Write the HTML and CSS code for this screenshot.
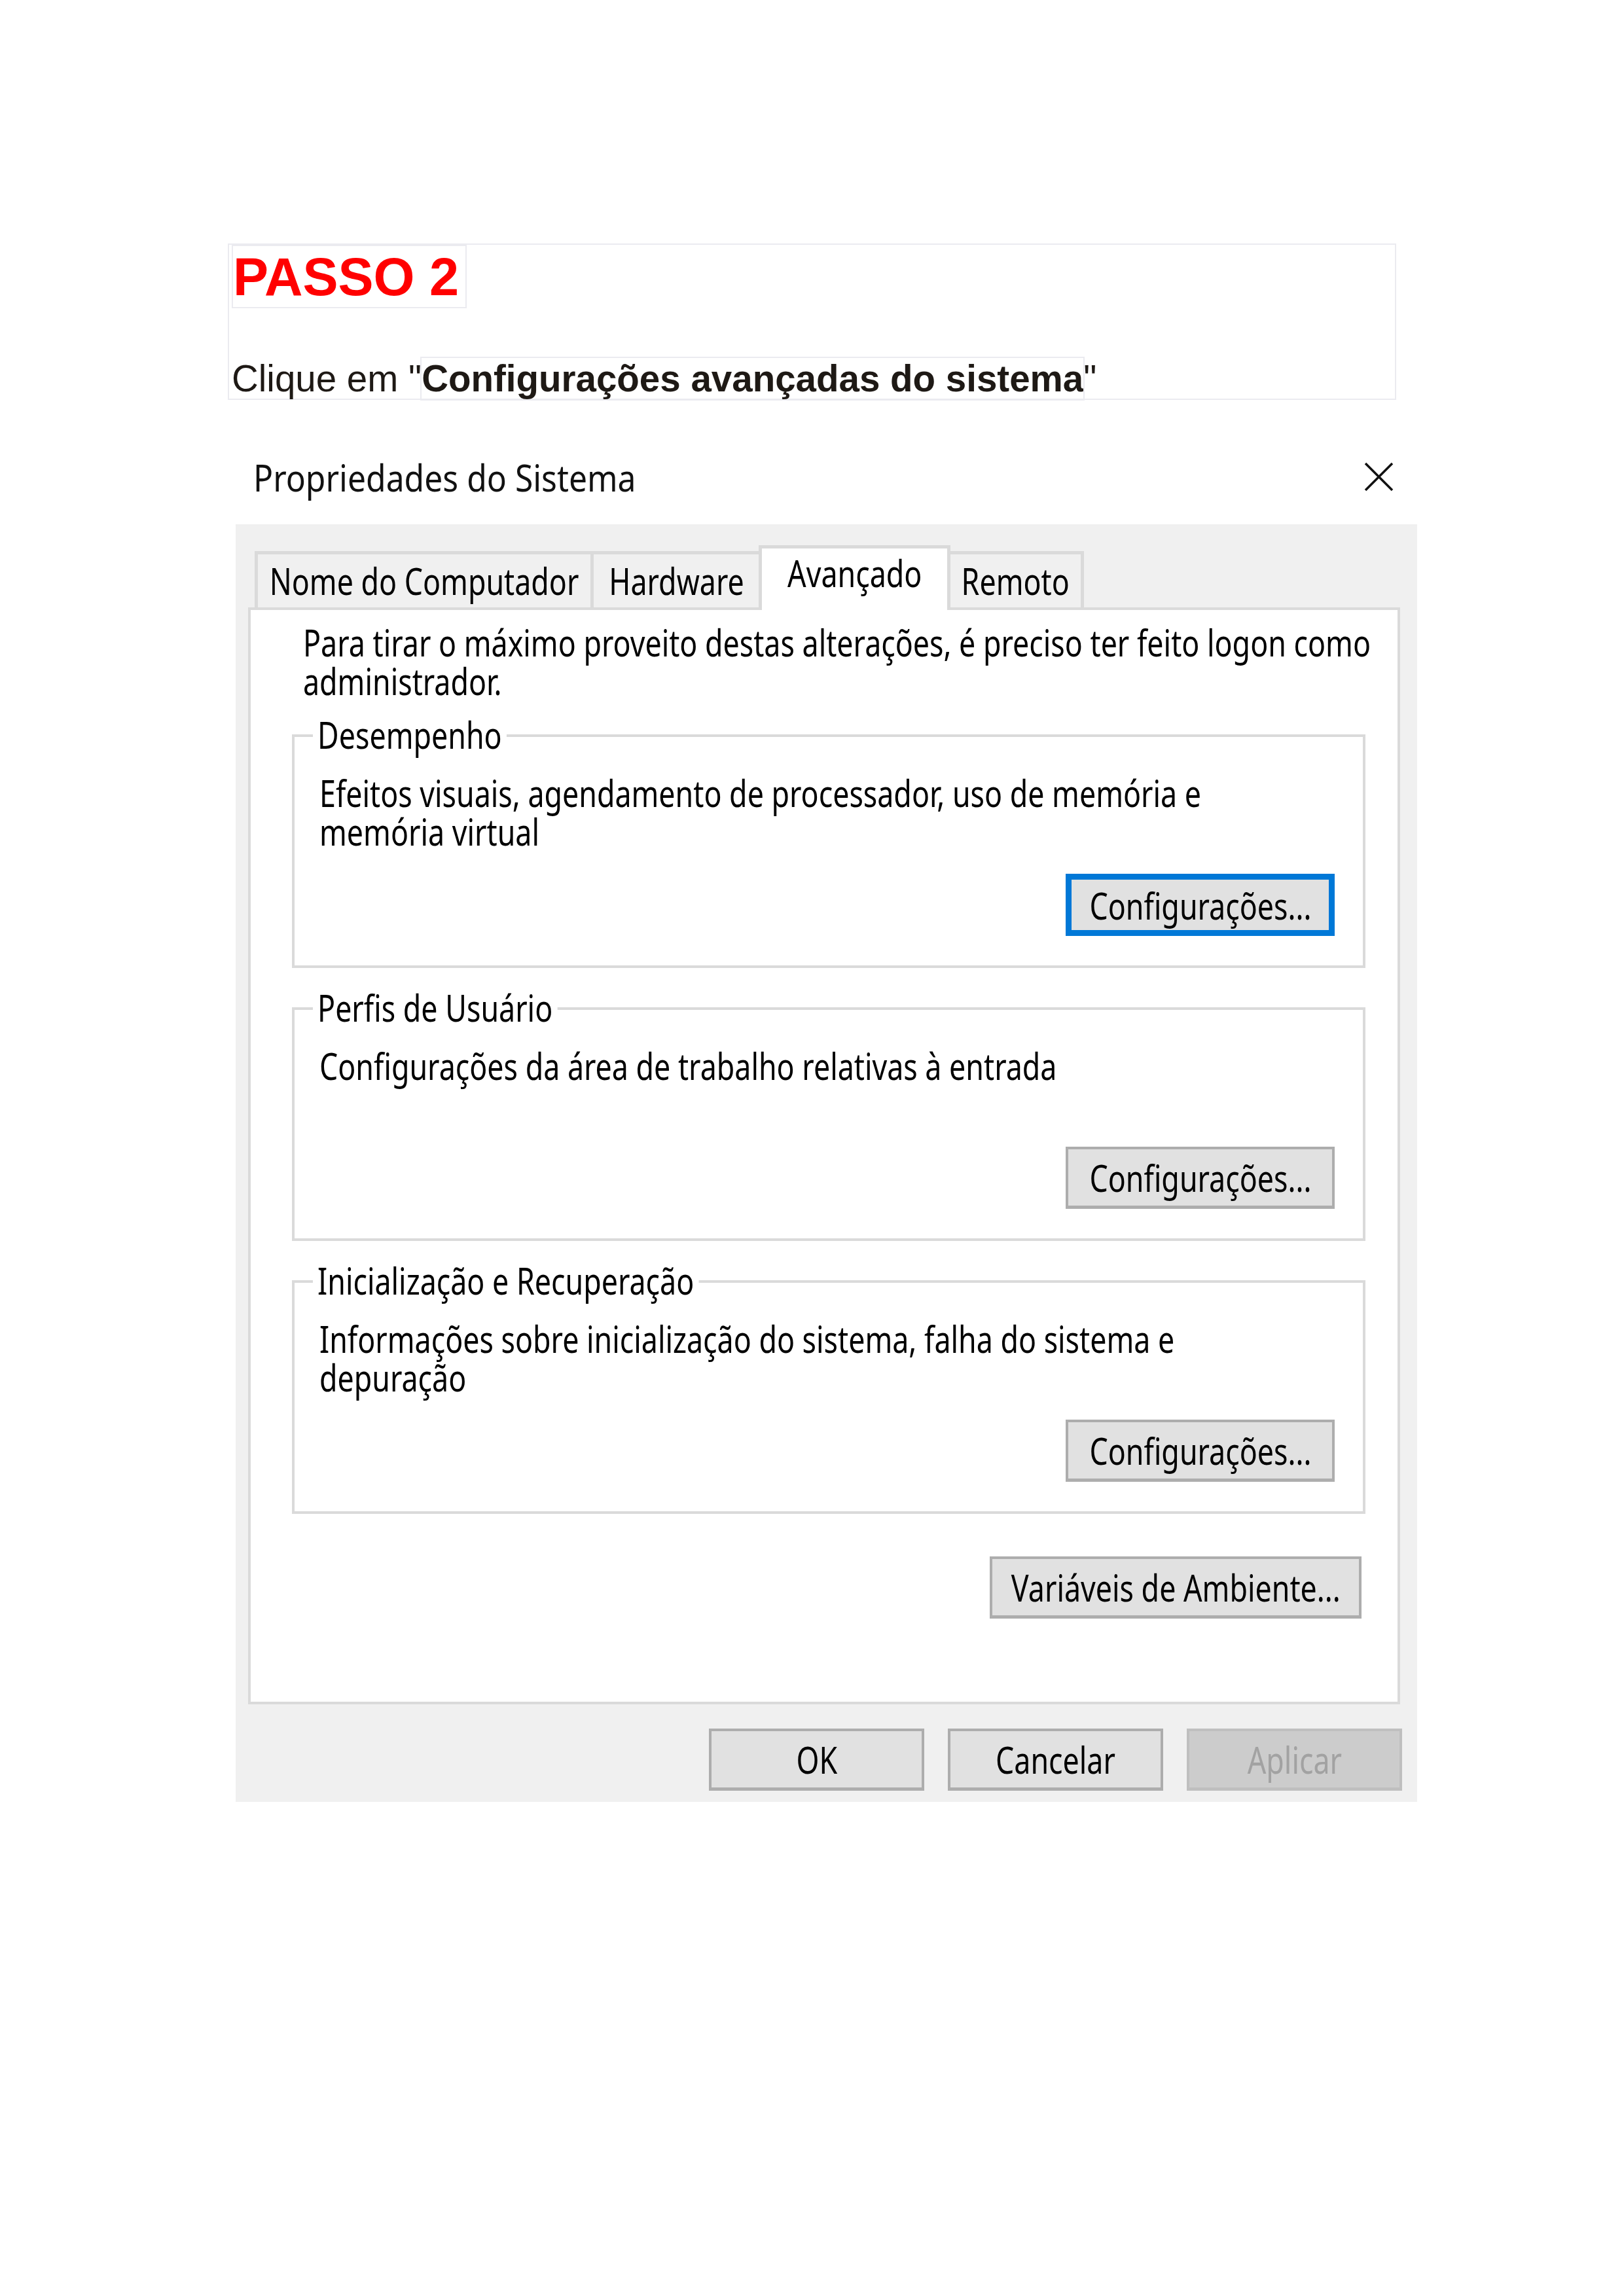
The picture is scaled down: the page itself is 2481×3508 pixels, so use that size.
FILE: index.html
```html
<!DOCTYPE html>
<html lang="pt">
<head>
<meta charset="utf-8">
<title>Passo 2</title>
<link rel="stylesheet" href="styles.css">
</head>
<body>
<section class="step">
  <div class="step-title">PASSO 2</div>
  <p class="step-text">Clique em "<b class="hl">Configurações avançadas do sistema</b>"</p>
</section>

<div class="dialog">
  <div class="titlebar">
    <span class="title-text">Propriedades do Sistema</span>
    <svg class="close" width="45" height="45" viewBox="0 0 45 45" aria-hidden="true">
      <line x1="2" y1="2" x2="43" y2="43"/>
      <line x1="43" y1="2" x2="2" y2="43"/>
    </svg>
  </div>
  <div class="body">
    <div class="tabs">
      <div class="tab tab-1"><span class="sq">Nome do Computador</span></div>
      <div class="tab tab-2"><span class="sq">Hardware</span></div>
      <div class="tab tab-active"><span class="sq">Avançado</span></div>
      <div class="tab tab-4"><span class="sq">Remoto</span></div>
    </div>
    <div class="panel">
      <p class="intro"><span class="sq sq-l">Para tirar o máximo proveito destas alterações, é preciso ter feito logon como<br>administrador.</span></p>

      <div class="group">
        <div class="legend-row"><span class="legend">Desempenho</span></div>
        <p class="desc"><span class="sq sq-l">Efeitos visuais, agendamento de processador, uso de memória e<br>memória virtual</span></p>
        <div class="group-actions"><div class="btn btn-cfg btn-focus"><span class="sq">Configurações...</span></div></div>
      </div>

      <div class="group">
        <div class="legend-row"><span class="legend">Perfis de Usuário</span></div>
        <p class="desc"><span class="sq sq-l">Configurações da área de trabalho relativas à entrada</span></p>
        <div class="group-actions"><div class="btn btn-cfg"><span class="sq">Configurações...</span></div></div>
      </div>

      <div class="group">
        <div class="legend-row"><span class="legend">Inicialização e Recuperação</span></div>
        <p class="desc"><span class="sq sq-l">Informações sobre inicialização do sistema, falha do sistema e<br>depuração</span></p>
        <div class="group-actions"><div class="btn btn-cfg"><span class="sq">Configurações...</span></div></div>
      </div>

      <div class="env-row"><div class="btn btn-env"><span class="sq">Variáveis de Ambiente...</span></div></div>
    </div>
    <div class="actions">
      <div class="btn btn-act"><span class="sq">OK</span></div>
      <div class="btn btn-act"><span class="sq">Cancelar</span></div>
      <div class="btn btn-act btn-disabled"><span class="sq">Aplicar</span></div>
    </div>
  </div>
</div>
</body>
</html>
```

FILE: styles.css
```css
html, body {
  margin: 0;
  padding: 0;
  background: #ffffff;
  overflow: hidden;
}

body {
  font-family: "Liberation Sans", Arial, sans-serif;
  width: 2481px;
  height: 3508px;
}

/* ---------- Step header ---------- */
.step {
  box-sizing: border-box;
  width: 1785px;
  height: 239px;
  margin: 372px 0 0 348px;
  border: 2px solid #ebebf0;
  padding: 0 4px;
}

.step-title {
  box-sizing: border-box;
  width: 359px;
  height: 97px;
  border: 2px solid #ebebf0;
  padding: 7px 0 0 0;
  color: #ff0000;
  font-weight: bold;
  font-size: 81px;
  line-height: 81px;
  white-space: nowrap;
}

.step-text {
  margin: 75px 0 0 0;
  font-size: 56.5px;
  line-height: 65px;
  color: #1e1915;
  white-space: nowrap;
}

.hl {
  outline: 2px solid #ebebf0;
}

/* ---------- Dialog ---------- */
.dialog {
  width: 1805px;
  margin: 89px 0 0 360px;
  font-family: "Noto Sans", "Open Sans", sans-serif;
  font-size: 57px;
  color: #000;
}

.titlebar {
  box-sizing: border-box;
  height: 101px;
  display: flex;
  justify-content: space-between;
  align-items: flex-start;
  padding: 0 36px 0 27px;
  background: #fff;
}

.title-text {
  display: inline-block;
  line-height: 58px;
  white-space: nowrap;
  transform: scaleX(0.874);
  transform-origin: 0 0;
  color: #111;
}

.close {
  margin-top: 6px;
}

.close line {
  stroke: #111;
  stroke-width: 3.6;
}

.body {
  box-sizing: border-box;
  height: 1952px;
  padding-top: 32px;
  background: #f0f0f0;
}

/* squeezed (narrow) dialog text */
.sq {
  display: inline-block;
  flex: none;
  white-space: nowrap;
  transform: scaleX(0.785);
  transform-origin: 50% 50%;
}

.sq-l {
  transform-origin: 0 0;
}

/* ---------- Tabs ---------- */
.tabs {
  display: flex;
  align-items: flex-end;
  padding-left: 29px;
  margin-bottom: -4px;
  position: relative;
  z-index: 1;
}

.tab {
  box-sizing: border-box;
  display: flex;
  justify-content: center;
  align-items: flex-start;
  height: 86px;
  margin-bottom: 4px;
  padding-top: 11px;
  border-top: 5px solid #dadada;
  border-left: 5px solid #dadada;
  background: #f0f0f0;
  line-height: 58px;
}

.tab-1 { width: 513px; }
.tab-2 { width: 257px; }

.tab-active {
  width: 293px;
  height: 99px;
  margin-bottom: 0;
  padding-top: 8px;
  background: #fff;
  border-right: 5px solid #dadada;
}

.tab-4 {
  width: 204px;
  border-left: 0;
  border-right: 5px solid #dadada;
}

/* ---------- Panel ---------- */
.panel {
  box-sizing: border-box;
  width: 1760px;
  height: 1676px;
  margin-left: 19px;
  border: 4px solid #dadada;
  background: #fff;
}

.intro {
  height: 116px;
  margin: 20px 0 0 80px;
  line-height: 59px;
}

.group {
  box-sizing: border-box;
  width: 1640px;
  height: 357px;
  margin: 54px 0 0 63px;
  border: 4px solid #dadada;
  padding-right: 43px;
}

.group + .group {
  margin-top: 60px;
}

.legend-row {
  height: 58px;
  margin: -33px 0 0 28px;
  line-height: 58px;
}

.legend {
  display: inline-block;
  padding: 0 9px;
  background: #fff;
  white-space: nowrap;
  transform: scaleX(0.785);
  transform-origin: 0 0;
}

.desc {
  height: 116px;
  margin: 31px 0 0 38px;
  line-height: 59px;
}

.group-actions {
  display: flex;
  justify-content: flex-end;
  margin-top: 37px;
}

.env-row {
  display: flex;
  justify-content: flex-end;
  margin: 65px 55px 0 0;
}

.actions {
  display: flex;
  justify-content: flex-end;
  gap: 36px;
  margin-top: 37px;
  padding-right: 23px;
}

/* ---------- Buttons ---------- */
.btn {
  box-sizing: border-box;
  display: flex;
  align-items: center;
  justify-content: center;
  height: 95px;
  background: #e1e1e1;
  border: 4px solid #adadad;
  border-bottom-width: 5px;
  line-height: 58px;
}

.btn-cfg { width: 411px; }
.btn-env { width: 568px; }
.btn-act { width: 329px; }

.btn-focus {
  border: 9px solid #0078d7;
}

.btn-disabled {
  background: #cccccc;
  border-color: #bfbfbf;
  color: #a2a2a2;
}
```
